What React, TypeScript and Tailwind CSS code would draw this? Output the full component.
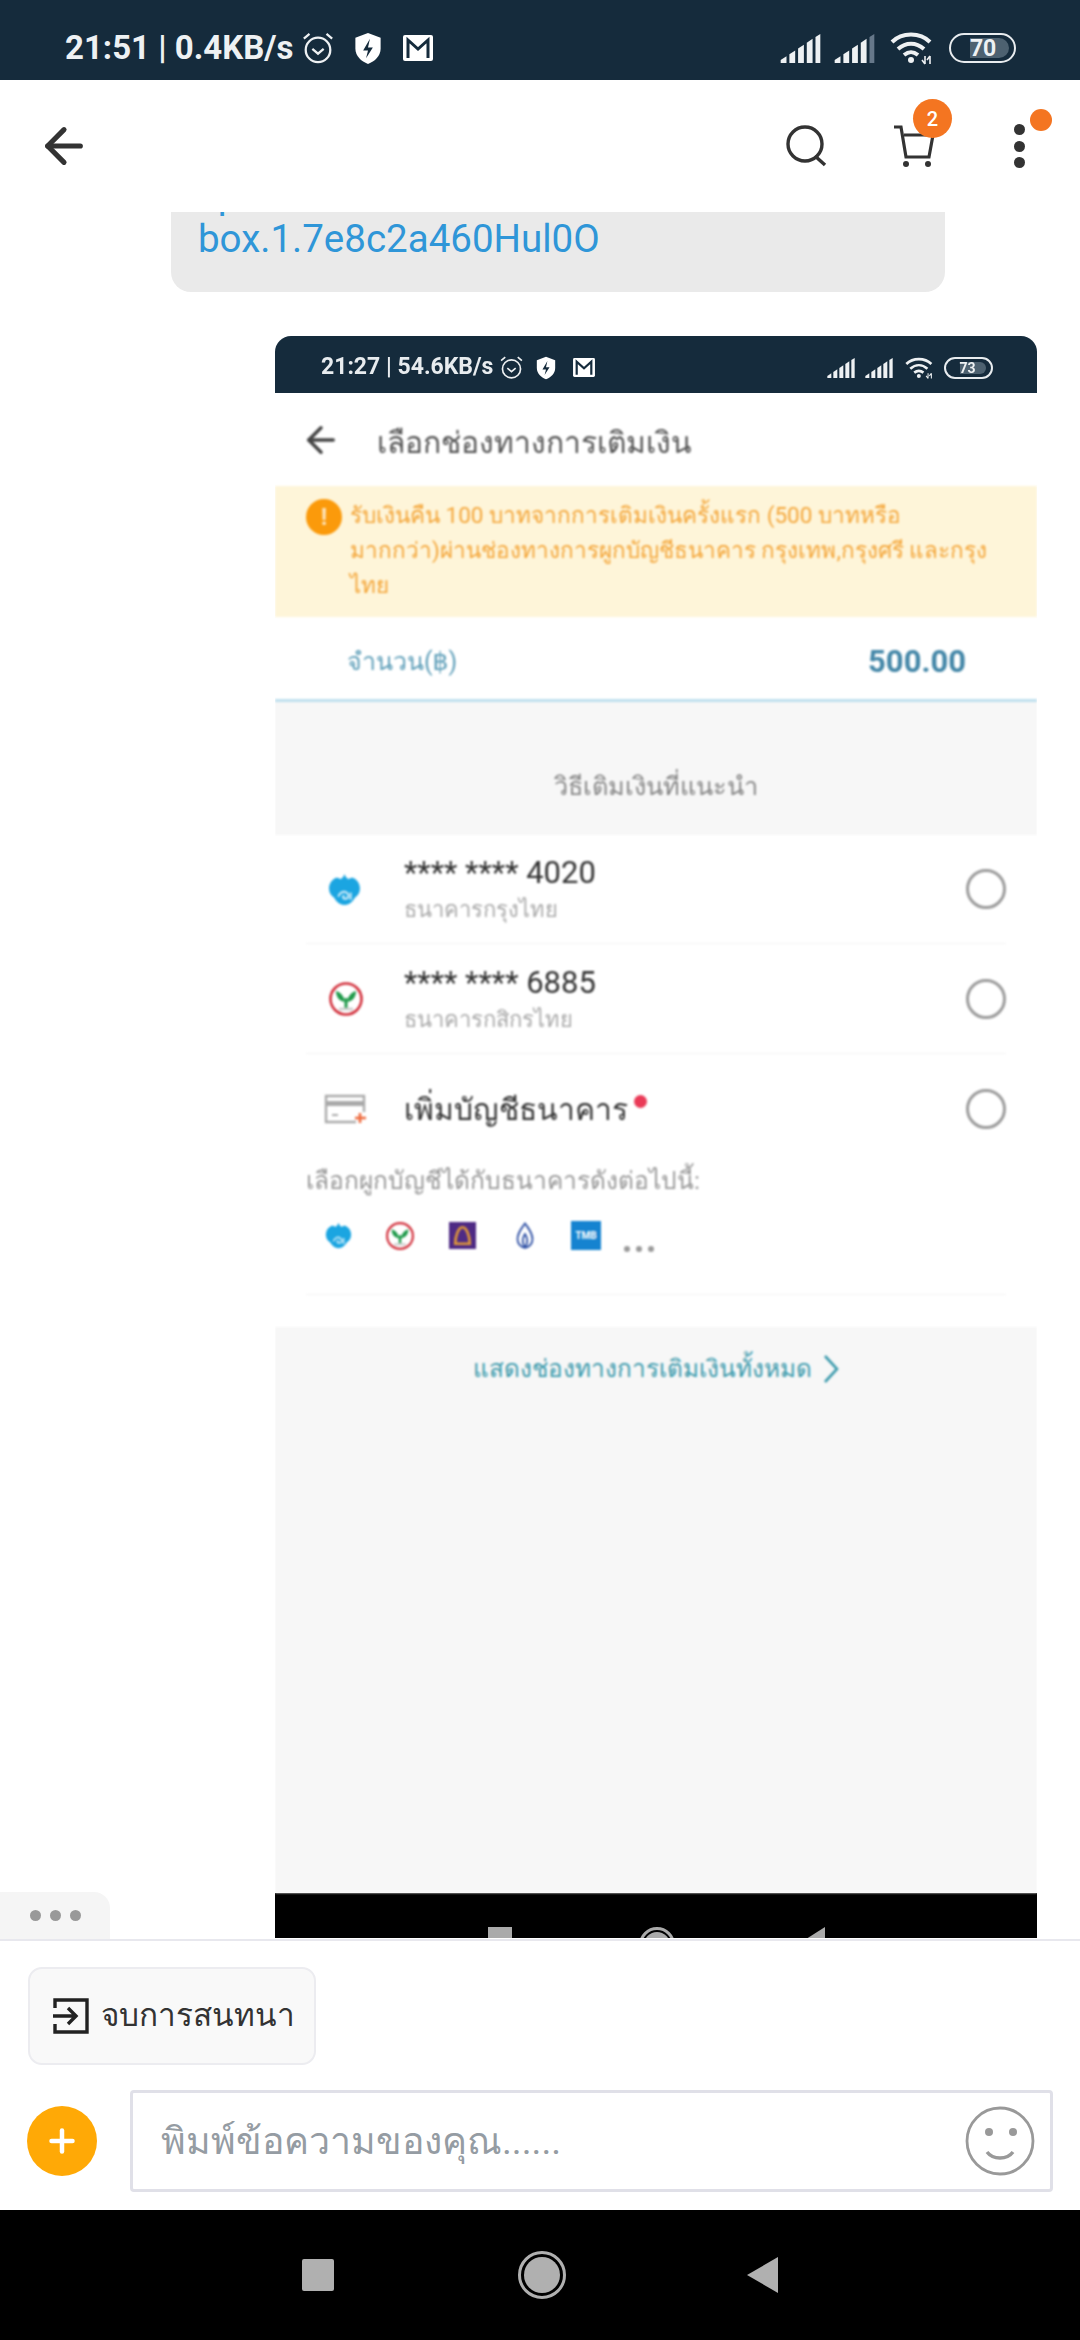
import React from 'react';
import { ArrowLeft, Plus } from 'lucide-react';

const FONT = 'font-["Roboto","Noto_Sans","DejaVu_Sans",sans-serif]';

// signal bars used in both status bars
const Signal: React.FC<{ className?: string; fade?: boolean }> = ({ className, fade }) => (
  <svg viewBox="0 0 41 30" className={className}>
    <polygon points="0,30 0,27 6,23 6,30" fill="#eef1f3" />
    <polygon points="9,30 9,21 15,17 15,30" fill="#eef1f3" />
    <polygon points="18,30 18,15 24,11 24,30" fill="#eef1f3" />
    <polygon points="27,30 27,9 33,5 33,30" fill="#eef1f3" />
    <polygon points="36,30 36,3 41,0 41,30" fill={fade ? '#66788a' : '#eef1f3'} />
  </svg>
);

const Wifi: React.FC<{ className?: string }> = ({ className }) => (
  <svg viewBox="0 0 44 34" fill="none" stroke="#eef1f3" strokeWidth="4" className={className}>
    <path d="M2 11C12 1 30 1 40 11" />
    <path d="M8 18c8-7 18-7 26 0" />
    <path d="M14 24c5-4 9-4 14 0" />
    <circle cx="21" cy="29" r="3" fill="#eef1f3" stroke="none" />
    <path d="M35 25v8M32 29l3 4M40 33v-8M37 29l3-4" strokeWidth="1.6" />
  </svg>
);

const Alarm: React.FC<{ className?: string }> = ({ className }) => (
  <svg viewBox="0 0 36 36" fill="none" stroke="#eef1f3" strokeWidth="2.4" className={className}>
    <circle cx="18" cy="20" r="13" />
    <path d="M12 19l6 5 6-5" />
    <path d="M3 8l6-5M33 8l-6-5" />
  </svg>
);

const Shield: React.FC<{ className?: string }> = ({ className }) => (
  <svg viewBox="0 0 28 34" className={className}>
    <path d="M14 1l13 5v11c0 8-6 13-13 16C7 30 1 25 1 17V6z" fill="#fff" />
    <path d="M16 7l-7 12h5l-2 8 7-11h-5z" fill="#152b3c" />
  </svg>
);

const Gmail: React.FC<{ className?: string }> = ({ className }) => (
  <svg viewBox="0 0 30 26" className={className}>
    <rect width="30" height="26" rx="2" fill="#fff" />
    <path d="M5 23V5l10 9L25 5v18" fill="none" stroke="#152b3c" strokeWidth="3" />
  </svg>
);

const Battery: React.FC<{ level: string; className?: string; text: string }> = ({ level, className, text }) => (
  <div className={`relative flex items-center overflow-hidden rounded-full border-2 border-[#e8ecef] ${className}`}>
    <div className="absolute inset-y-[3px] left-[30%] right-[5px] rounded-r-full bg-[#4d6170]" />
    <span className={`relative ml-[30%] font-bold leading-none text-[#eef1f3] ${text}`}>{level}</span>
  </div>
);

const KrungThai: React.FC<{ className?: string }> = ({ className }) => (
  <svg viewBox="0 0 32 32" className={className}>
    <path d="M16 1c1 3 2 4 4 5 1-1 3-2 5-1 4 2 6 6 6 10 0 4-2 7-5 9-2 4-6 7-10 7s-8-3-10-7c-3-2-5-5-5-9 0-4 2-8 6-10 2-1 4 0 5 1 2-1 3-2 4-5z" fill="#1ba5e1" />
    <path d="M10 23c1-4 5-6 8-4 3 2 2 6-1 6s-3-3-1-3" fill="none" stroke="#d4eefa" strokeWidth="1.8" />
    <path d="M22 19v7" stroke="#d4eefa" strokeWidth="1.8" />
  </svg>
);

const KBank: React.FC<{ className?: string }> = ({ className }) => (
  <svg viewBox="0 0 36 36" className={className}>
    <circle cx="18" cy="18" r="15.5" fill="#fff" stroke="#d2303c" strokeWidth="2.6" />
    <path d="M17 21c-1-5-3-9-9-11 0 6 3 10 9 11zM19 21c1-5 3-9 9-11 0 6-3 10-9 11z" fill="#1f9a4a" />
    <path d="M18 17v10" stroke="#1f9a4a" strokeWidth="3" />
    <path d="M11 28h14" stroke="#ccc" strokeWidth="2.6" />
  </svg>
);

const Scb: React.FC<{ className?: string }> = ({ className }) => (
  <svg viewBox="0 0 26 26" className={className}>
    <rect width="26" height="26" fill="#4e2a84" />
    <path d="M6 21c0-7 3-16 7-16s7 9 7 16z" fill="none" stroke="#e0983a" strokeWidth="2.5" />
  </svg>
);

const Bangkok: React.FC<{ className?: string }> = ({ className }) => (
  <svg viewBox="0 0 24 36" fill="none" stroke="#2c4ea3" strokeWidth="2.4" className={className}>
    <path d="M12 2c5 7 10 12 10 21 0 6-5 11-10 11S2 29 2 23C2 14 7 9 12 2z" />
    <path d="M12 34c-4-6-4-12 0-18 4 6 4 12 0 18z" />
  </svg>
);

const AccountRow: React.FC<{ logo: React.ReactNode; number: string; bank: string; height: string }> = ({ logo, number, bank, height }) => (
  <div className={`flex items-center border-b border-[#f3f3f3] ${height}`}>
    <div className="flex w-[98px] justify-start pl-[22px]">{logo}</div>
    <div className="flex flex-1 flex-col pt-[6px]">
      <span className="text-[31px] leading-[36px] text-[#333]">{number}</span>
      <span className="text-[22px] leading-[38px] text-[#aaa]">{bank}</span>
    </div>
    <div className="size-[40px] rounded-full border-[3px] border-[#9b9b9b]" />
  </div>
);

function TopupScreen() {
  return (
    <div className="flex h-[1602px] w-[762px] flex-col overflow-hidden rounded-t-[16px] bg-white">
      <div className="flex h-[57px] shrink-0 items-center justify-between bg-[#152b3c] pl-[46px] pr-[44px] pt-[6px] blur-[0.5px]">
        <div className="flex items-center">
          <span className="text-[23px] font-bold text-[#e8ecef]">21:27 | 54.6KB/s</span>
          <Alarm className="ml-[6px] size-[25px]" />
          <Shield className="ml-[12px] h-[24px] w-[20px]" />
          <Gmail className="ml-[17px] h-[19px] w-[22px]" />
        </div>
        <div className="flex items-center">
          <Signal className="h-[20px] w-[30px]" />
          <Signal className="ml-[8px] h-[20px] w-[30px]" />
          <Wifi className="ml-[11px] h-[24px] w-[29px]" />
          <Battery level="73" className="ml-[10px] h-[22px] w-[49px]" text="text-[14px]" />
        </div>
      </div>

      <div className="flex flex-1 flex-col blur-[0.8px]">
        <div className="flex h-[93px] shrink-0 items-center pl-[25px]">
          <ArrowLeft size={42} strokeWidth={2} className="text-[#444]" />
          <span className="ml-[35px] pt-[5px] text-[30px] text-[#555]">เลือกช่องทางการเติมเงิน</span>
        </div>

        <div className="flex h-[131px] shrink-0 bg-[#fef5d9] pl-[31px] pr-[30px] pt-[12px]">
          <div className="mt-[1px] flex size-[36px] shrink-0 items-center justify-center rounded-full bg-[#fb9a0b] text-[24px] font-bold text-[#fde5bd]">!</div>
          <p className="ml-[8px] whitespace-nowrap text-[22.5px] leading-[35px] text-[#f4a63a]">
            รับเงินคืน 100 บาทจากการเติมเงินครั้งแรก (500 บาทหรือ
            <br />
            มากกว่า)ผ่านช่องทางการผูกบัญชีธนาคาร กรุงเทพ,กรุงศรี และกรุง
            <br />
            ไทย
          </p>
        </div>

        <div className="flex h-[85px] shrink-0 items-center justify-between border-b-[3px] border-[#bfe0ee] pl-[72px] pr-[71px] pt-[8px]">
          <span className="text-[25px] text-[#5f9fb9]">จำนวน(฿)</span>
          <span className="text-[31px] font-bold text-[#4487a8]">500.00</span>
        </div>

        <div className="flex h-[133px] shrink-0 items-center justify-center bg-[#f7f7f7] pt-[36px]">
          <span className="text-[25.3px] text-[#888]">วิธีเติมเงินที่แนะนำ</span>
        </div>

        <div className="flex shrink-0 flex-col px-[31px]">
          <AccountRow height="h-[109px]" logo={<KrungThai className="size-[33px]" />} number="**** **** 4020" bank="ธนาคารกรุงไทย" />
          <AccountRow height="h-[110px]" logo={<KBank className="size-[36px]" />} number="**** **** 6885" bank="ธนาคารกสิกรไทย" />
          <div className="flex h-[110px] items-center">
            <div className="w-[98px] pl-[18px]">
              <svg viewBox="0 0 44 30" className="h-[30px] w-[44px]" fill="none">
                <path d="M32 28H2V2h38v16" stroke="#aaa" strokeWidth="2.4" />
                <rect x="2" y="7" width="38" height="5" fill="#aaa" />
                <path d="M8 21h6" stroke="#aaa" strokeWidth="2" />
                <path d="M36 19v10M31 24h11" stroke="#ee6a3d" strokeWidth="2.6" />
              </svg>
            </div>
            <span className="text-[30px] text-[#333]">เพิ่มบัญชีธนาคาร</span>
            <span className="mb-[16px] ml-[6px] size-[13px] rounded-full bg-[#ea3a57]" />
            <div className="ml-auto size-[40px] rounded-full border-[3px] border-[#9b9b9b]" />
          </div>
          <span className="text-[24.5px] leading-[34px] text-[#999]">เลือกผูกบัญชีได้กับธนาคารดังต่อไปนี้:</span>
          <div className="flex h-[97px] items-center border-b border-[#f3f3f3] pb-[21px] pl-[19px]">
            <KrungThai className="size-[27px]" />
            <KBank className="ml-[33px] size-[30px]" />
            <Scb className="ml-[34px] size-[27px]" />
            <Bangkok className="ml-[38px] h-[27px] w-[22px]" />
            <div className="ml-[35px] flex h-[29px] w-[30px] items-center justify-center bg-[#1583d0] text-[10px] font-bold text-white">TMB</div>
            <div className="ml-[23px] mt-[26px] flex gap-[6px]">
              <span className="size-[6px] rounded-full bg-[#999]" />
              <span className="size-[6px] rounded-full bg-[#999]" />
              <span className="size-[6px] rounded-full bg-[#999]" />
            </div>
          </div>
        </div>

        <div className="mt-[32px] flex flex-1 items-start justify-center bg-[#f7f7f7] pt-[27px]">
          <span className="text-[24.3px] leading-[30px] text-[#3d9bad]">แสดงช่องทางการเติมเงินทั้งหมด</span>
          <svg viewBox="0 0 18 30" fill="none" stroke="#3d9bad" strokeWidth="2.6" className="ml-[10px] h-[30px] w-[18px]">
            <path d="M3 2l12 13-12 13" />
          </svg>
        </div>
      </div>

      <div className="h-[45px] shrink-0 overflow-hidden bg-black">
        <div className="flex items-start justify-center pt-[34px]">
          <div className="size-[24px] bg-[#aaa]" />
          <div className="ml-[127px] flex size-[36px] items-center justify-center rounded-full border-[3px] border-[#aaa]">
            <div className="size-[26px] rounded-full bg-[#aaa]" />
          </div>
          <div className="ml-[128px] size-0 border-y-[14px] border-r-[22px] border-y-transparent border-r-[#aaa]" />
        </div>
      </div>
    </div>
  );
}

export default function App() {
  return (
    <div className={`relative flex h-[2340px] w-[1080px] flex-col overflow-hidden bg-white ${FONT}`}>
      <div className="flex h-[80px] shrink-0 items-center justify-between bg-[#152b3c] pl-[65px] pr-[64px] pt-[16px]">
        <div className="flex items-center">
          <span className="text-[33px] font-bold text-[#eef1f3]">21:51 | 0.4KB/s</span>
          <Alarm className="ml-[8px] size-[34px]" />
          <Shield className="ml-[19px] h-[33px] w-[28px]" />
          <Gmail className="ml-[21px] h-[26px] w-[30px]" />
        </div>
        <div className="flex items-center">
          <Signal className="h-[29px] w-[41px]" />
          <Signal fade className="ml-[13px] h-[29px] w-[41px]" />
          <Wifi className="ml-[15px] h-[34px] w-[44px]" />
          <Battery level="70" className="ml-[15px] h-[30px] w-[67px]" text="text-[23px]" />
        </div>
      </div>

      <div className="flex h-[132px] shrink-0 items-center pl-[36px] pr-[55px]">
        <ArrowLeft size={56} strokeWidth={2.2} className="text-[#333]" />
        <div className="ml-auto flex items-center">
          <svg viewBox="0 0 42 42" fill="none" stroke="#333" strokeWidth="3.4" className="h-[42px] w-[42px]">
            <circle cx="19" cy="19" r="17" />
            <path d="M29 31l10 9" />
          </svg>
          <div className="relative ml-[65px] h-[44px] w-[42px]">
            <svg viewBox="0 0 42 44" fill="none" stroke="#333" strokeWidth="3.2" className="h-[44px] w-[42px]">
              <path d="M1 3h7l5 30h23l4-22H11" />
              <circle cx="13" cy="40" r="3" fill="#333" stroke="none" />
              <circle cx="35" cy="40" r="3" fill="#333" stroke="none" />
            </svg>
            <span className="absolute -right-[17px] -top-[25px] flex size-[39px] items-center justify-center rounded-full bg-[#f47521] text-[20px] font-medium text-white">2</span>
          </div>
          <div className="relative ml-[79px] flex h-[44px] w-[11px] flex-col items-center justify-between">
            <span className="size-[11px] shrink-0 rounded-full bg-[#333]" />
            <span className="size-[11px] shrink-0 rounded-full bg-[#333]" />
            <span className="size-[11px] shrink-0 rounded-full bg-[#333]" />
            <span className="absolute -right-[27px] -top-[15px] size-[22px] rounded-full bg-[#f47521]" />
          </div>
        </div>
      </div>

      <div className="relative h-[1727px] shrink-0 overflow-hidden">
        <div className="ml-[171px] -mt-[41px] h-[121px] w-[774px] rounded-b-[20px] bg-[#eaeaea] pl-[27px] text-[38.5px] leading-[48px] text-[#2f96d8]">
          <div className="-mb-[4px]">spm=a2o4m.chat</div>
          <div>box.1.7e8c2a460Hul0O</div>
        </div>
        <div className="ml-[275px] mt-[44px]">
          <TopupScreen />
        </div>
        <div className="absolute bottom-0 left-0 flex h-[47px] w-[110px] items-center gap-[9px] rounded-tr-[16px] bg-[#f5f5f5] pl-[30px]">
          <span className="size-[11px] rounded-full bg-[#999]" />
          <span className="size-[11px] rounded-full bg-[#999]" />
          <span className="size-[11px] rounded-full bg-[#999]" />
        </div>
      </div>

      <div className="flex h-[271px] shrink-0 flex-col border-t-[2px] border-[#e8e8ee]">
        <div className="ml-[28px] mt-[26px] flex h-[98px] w-[288px] items-center rounded-[14px] border-[2px] border-[#ececf0] bg-[#f9f9f9] pl-[22px]">
          <svg viewBox="0 0 38 38" fill="none" stroke="#222" strokeWidth="3.4" className="h-[38px] w-[38px]">
            <path d="M3 11V3h32v32H3v-8" />
            <path d="M1 19h22M16 11l8 8-8 8" />
          </svg>
          <span className="ml-[11px] text-[31.5px] text-[#333]">จบการสนทนา</span>
        </div>
        <div className="mt-[25px] flex items-center pl-[27px] pr-[27px]">
          <div className="flex size-[70px] items-center justify-center rounded-full bg-[#ffa906]">
            <Plus size={36} strokeWidth={3} className="text-white" />
          </div>
          <div className="ml-[33px] flex h-[102px] flex-1 items-center rounded-[4px] border-[3px] border-[#e0e0e8] pl-[28px] pr-[15px]">
            <span className="text-[37.4px] text-[#959ca3]">พิมพ์ข้อความของคุณ......</span>
            <svg viewBox="0 0 70 70" fill="none" stroke="#999" strokeWidth="2.8" className="ml-auto h-[70px] w-[70px]">
              <circle cx="35" cy="35" r="33" />
              <circle cx="24" cy="26" r="4" fill="#999" stroke="none" />
              <circle cx="48" cy="26" r="4" fill="#999" stroke="none" />
              <path d="M22 46c6 8 20 8 26 0" strokeWidth="3.4" />
            </svg>
          </div>
        </div>
      </div>

      <div className="flex h-[130px] shrink-0 items-center justify-center bg-black">
        <div className="size-[32px] rounded-[2px] bg-[#b0b0b0]" />
        <div className="ml-[184px] flex size-[48px] items-center justify-center rounded-full border-[3px] border-[#b0b0b0]">
          <div className="size-[36px] rounded-full bg-[#b0b0b0]" />
        </div>
        <div className="ml-[181px] size-0 border-y-[18px] border-r-[31px] border-y-transparent border-r-[#b0b0b0]" />
      </div>
    </div>
  );
}
